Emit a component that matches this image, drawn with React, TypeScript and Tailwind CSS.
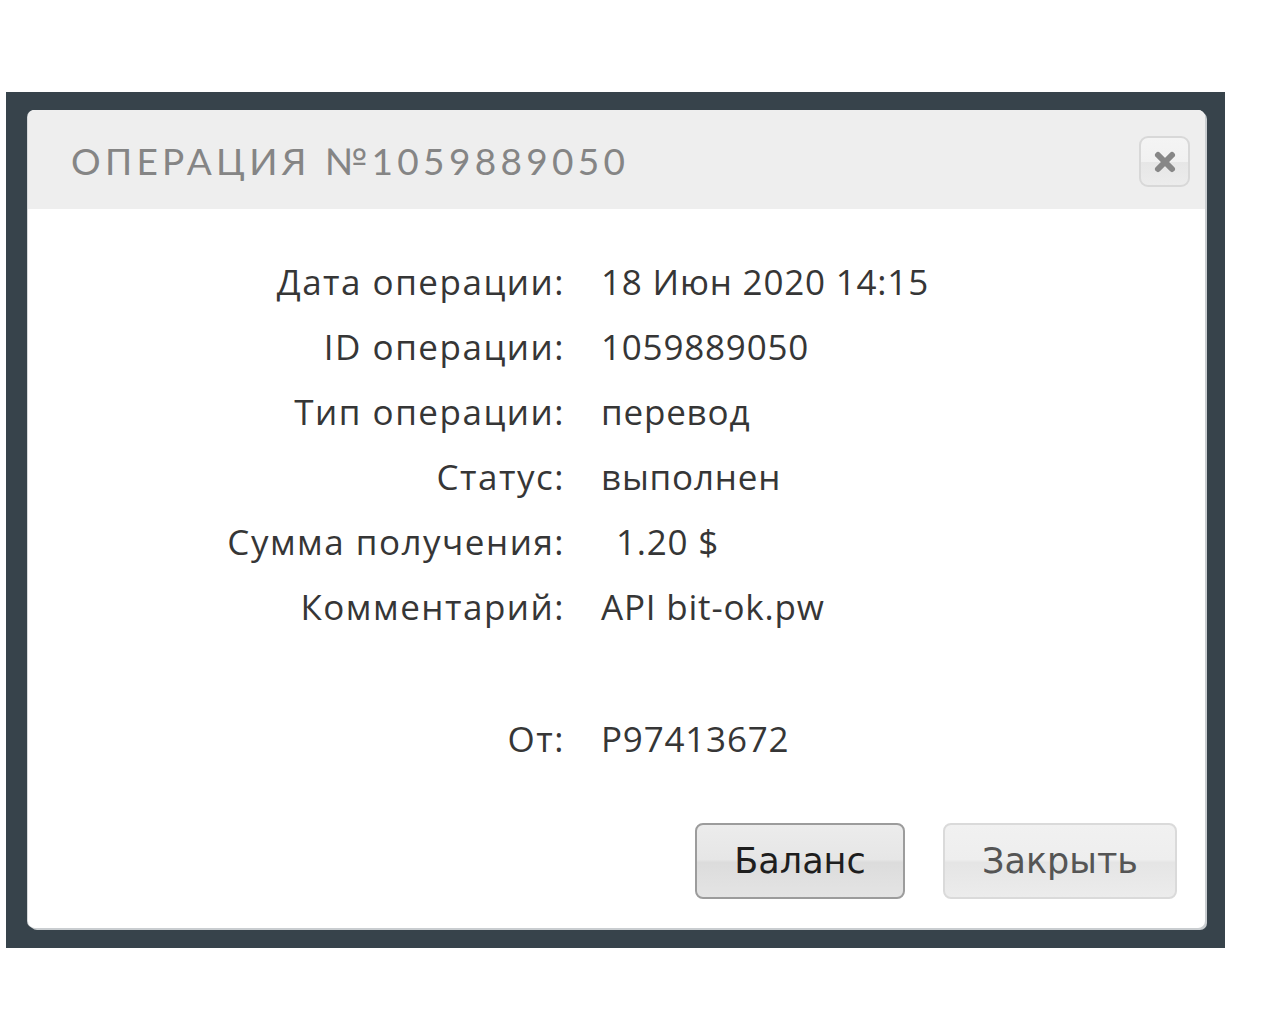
import React from "react";

const rows: [string, React.ReactNode][] = [
  ["Дата операции:", "18 Июн 2020 14:15"],
  ["ID операции:", "1059889050"],
  ["Тип операции:", "перевод"],
  ["Статус:", "выполнен"],
  ["Сумма получения:", <span className="pl-[15px]">1.20 $</span>],
  ["Комментарий:", "API bit-ok.pw"],
];

export default function App() {
  return (
    <div className="w-[1280px] h-[1024px] bg-white pt-[92px] pl-[6px]">
      <div className="w-[1219px] h-[856px] bg-[#37434b] pt-[18px] pl-[22px]">
        <div className="w-[1177px] h-[818px] bg-white rounded-[7px] shadow-[2px_2px_0_#c9cdd0,-1px_0_0_#d5d8da] flex flex-col">
          <div className="h-[99px] bg-[#eeeeee] rounded-t-[7px] flex items-center justify-between pl-[43px] pr-[15px] pt-[2px]">
            <div
              className="text-[37px] tracking-[4.3px] text-[#858585] leading-none"
              style={{ fontFamily: "Lato, 'Open Sans', sans-serif" }}
            >
              ОПЕРАЦИЯ №1059889050
            </div>
            <div className="w-[51px] h-[51px] rounded-[9px] border-2 border-[#d8d8d8] bg-[linear-gradient(#f4f4f4_0%,#f1f1f1_50%,#e6e6e6_51%,#ececec_100%)] flex items-center justify-center mt-[2px]">
              <svg width="24" height="24" viewBox="0 0 24 24">
                <path d="M5 5 L19 19 M19 5 L5 19" stroke="#878787" strokeWidth="6" strokeLinecap="round" />
              </svg>
            </div>
          </div>
          <div
            className="pt-[40px] text-[#363636] text-[35px] leading-[65px]"
            style={{ fontFamily: "'Open Sans', sans-serif" }}
          >
            {rows.map(([l, v]) => (
              <div key={l} className="grid grid-cols-[537px_1fr] gap-x-[36px]">
                <div className="text-right tracking-[1.5px]">{l}</div>
                <div className="tracking-[0.8px]">{v}</div>
              </div>
            ))}
            <div className="h-[67px]" />
            <div className="grid grid-cols-[537px_1fr] gap-x-[36px]">
              <div className="text-right tracking-[1.5px]">От:</div>
              <div className="tracking-[0.8px]">P97413672</div>
            </div>
          </div>
          <div
            className="flex justify-end gap-[38px] pr-[28px] mt-[52px]"
            style={{ fontFamily: "'DejaVu Sans', 'Noto Sans', sans-serif" }}
          >
            <div className="w-[210px] h-[76px] rounded-[8px] border-2 border-[#9c9c9c] bg-[linear-gradient(#ececec_0%,#e6e6e6_48%,#dcdcdc_52%,#e4e4e4_100%)] flex items-center justify-center text-[35px] text-[#1e1e1e]">
              Баланс
            </div>
            <div className="w-[234px] h-[76px] rounded-[8px] border-2 border-[#dadada] bg-[linear-gradient(#f1f1f1_0%,#eeeeee_48%,#e5e5e5_52%,#ececec_100%)] flex items-center justify-center text-[35px] text-[#555555]">
              Закрыть
            </div>
          </div>
        </div>
      </div>
    </div>
  );
}
